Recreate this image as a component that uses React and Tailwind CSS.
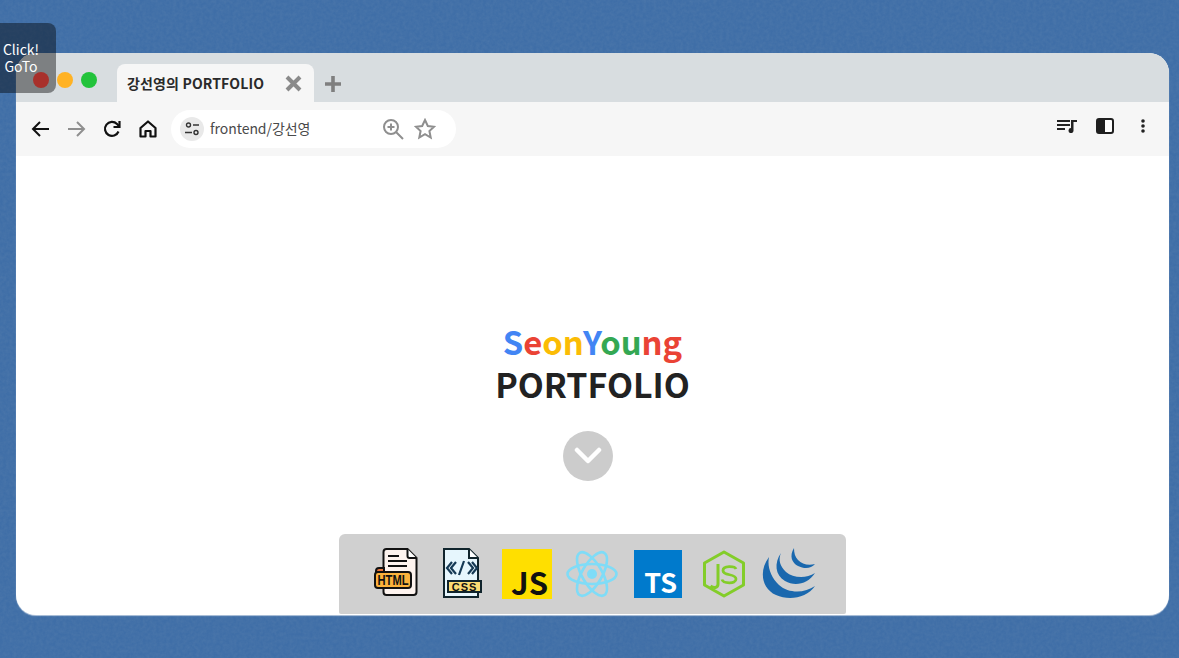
function HtmlIcon() {
  return (
    <svg width="44" height="48" viewBox="0 0 44 48" fill="none">
      <path d="M9.5 4a3 3 0 0 1 3-3h21l9 9v34a3 3 0 0 1-3 3h-27a3 3 0 0 1-3-3z" fill="#fdf3ee" stroke="#111" strokeWidth="2" />
      <path d="M33.5 1v7a2 2 0 0 0 2 2h7" fill="#fff" stroke="#111" strokeWidth="2" />
      <path d="M14 8h11M14 13h19M14 18h19" stroke="#111" strokeWidth="2" />
      <path d="M2 24v-1a3 3 0 0 1 3-3h5v5z" fill="#e8743b" stroke="#111" strokeWidth="2" />
      <rect x="1" y="24" width="36" height="16" rx="3" fill="#fbb23c" stroke="#111" strokeWidth="2" />
      <text x="19" y="37" textAnchor="middle" fontFamily="'Liberation Sans', sans-serif" fontWeight="700" fontSize="14" textLength="31" lengthAdjust="spacingAndGlyphs" fill="#111">HTML</text>
    </svg>
  );
}
function CssIcon() {
  return (
    <svg width="41" height="50" viewBox="0 0 41 50" fill="none">
      <path d="M3 1h25l9 9v39H3z" fill="#e6f6fd" stroke="#10242c" strokeWidth="2" />
      <path d="M28 1v9h9" fill="#fff" stroke="#10242c" strokeWidth="2" />
      <path d="M11 14l-5 6 5 6M15 14l-5 6 5 6M27 14l5 6-5 6M31 14l5 6-5 6M23 13l-5 14" stroke="#163a55" strokeWidth="2.2" />
      <rect x="7" y="33" width="33" height="11" fill="#fbdc74" stroke="#10242c" strokeWidth="2" />
      <text x="23.5" y="42.7" textAnchor="middle" fontFamily="'Liberation Sans', sans-serif" fontWeight="700" fontSize="11" letterSpacing="1" fill="#111">CSS</text>
    </svg>
  );
}
function ReactIcon() {
  return (
    <svg width="52" height="50" viewBox="0 0 52 50" fill="none" stroke="#7fdcf7" strokeWidth="2.6">
      <circle cx="26" cy="25" r="5" fill="#7fdcf7" stroke="none" />
      <ellipse cx="26" cy="25" rx="24.5" ry="10" />
      <ellipse cx="26" cy="25" rx="24.5" ry="10" transform="rotate(60 26 25)" />
      <ellipse cx="26" cy="25" rx="24.5" ry="10" transform="rotate(120 26 25)" />
    </svg>
  );
}
function NodeIcon() {
  return (
    <svg width="44" height="48" viewBox="0 0 44 48" fill="none" stroke="#83cd29" strokeWidth="3" strokeLinejoin="round">
      <path d="M22 2L41.5 13v22L22 46 2.5 35V13z" />
      <path d="M16 14v20c0 4-4 4.500-7.500 2" />
      <path d="M34 19c-1-3-13-4-13 1.500 0 6 13 2.500 13 8.500 0 5.500-13 4.500-14 .5" strokeWidth="2.8" />
    </svg>
  );
}
function JqueryIcon() {
  return (
    <svg width="54" height="52" viewBox="0 0 54 52" fill="#1a68ae">
      <path d="M7 9C-3 22-1 40 14 47c13 6 31 3 39-9-10 7-26 8-36-1C9 29 5 19 7 9z" />
      <path d="M19 5c-7 10-6 22 4 28 10 6 23 3 30-8-9 6-22 5-29-1-6-6-8-12-5-19z" />
      <path d="M32 0c-5 8-2 15 4 18 6 3 13 3 17-2-7 2-13 0-17-4-3-3-4-7-4-12z" />
    </svg>
  );
}
export default function App() {
  return (
    <div className="relative h-[658px] w-full overflow-hidden bg-[#3f6ea7] pt-[53px] pl-[16px] pr-[10px] pb-[43px] font-['Noto_Sans_CJK_KR','Noto_Sans',sans-serif]">
      <svg className="absolute inset-0" width="1179" height="658">
        <filter id="paper">
          <feTurbulence type="fractalNoise" baseFrequency="0.3" numOctaves="3" seed="4" />
          <feColorMatrix values="0 0 0 0 0.15  0 0 0 0 0.27  0 0 0 0 0.45  0 0 0 0.35 -0.09" />
        </filter>
        <rect width="1179" height="658" filter="url(#paper)" />
      </svg>
      <div className="relative flex h-full flex-col overflow-hidden rounded-[20px] bg-white shadow-[0_1px_1px_rgba(255,255,255,0.6)]">
        <div className="flex h-[49px] shrink-0 items-end bg-[#d8dde0] pl-[101px]">
          <div className="flex h-[38px] w-[197px] items-center justify-between rounded-t-[8px] bg-[#f6f6f6] pl-[10px] pr-[12px] pt-[1px]">
            <span className="text-[14px] font-bold tracking-[0.14px] text-[#2a2a2a]">강선영의 PORTFOLIO</span>
            <svg width="17" height="17" viewBox="0 0 17 17" stroke="#8a8a8a" strokeWidth="4"><path d="M2 2l13 13M15 2L2 15" /></svg>
          </div>
          <svg className="mb-[10px] ml-[11px]" width="16" height="16" viewBox="0 0 16 16" stroke="#7f7f7f" strokeWidth="3.6"><path d="M8 0v16M0 8h16" /></svg>
        </div>
        <div className="flex h-[54px] shrink-0 items-center bg-[#f6f6f6] pb-[1px] pl-[15px] pr-[24px]">
          <svg width="19" height="18" viewBox="0 0 19 18" fill="none" stroke="#111" strokeWidth="2"><path d="M18 9H2M9 2L2 9l7 7" /></svg>
          <svg className="ml-[17px]" width="19" height="18" viewBox="0 0 19 18" fill="none" stroke="#8f8f8f" strokeWidth="2"><path d="M1 9h16M10 2l7 7-7 7" /></svg>
          <svg className="ml-[17px]" width="18" height="18" viewBox="0 0 18 18" fill="none" stroke="#111" strokeWidth="2.2"><path d="M15.5 11.5A7 7 0 1 1 14 4l2 2" /><path d="M16.5 1v6h-6" /></svg>
          <svg className="ml-[18px]" width="18" height="18" viewBox="0 0 18 18" fill="none" stroke="#111" strokeWidth="2.2" strokeLinejoin="round"><path d="M1.5 8L9 1.500 16.500 8v8.500h-5V11h-5v5.500h-5z" /></svg>
          <div className="ml-[14px] flex h-[38px] w-[285px] items-center rounded-full bg-white pl-[9px]">
            <div className="flex h-[24px] w-[24px] items-center justify-center rounded-full bg-[#e9e9e9]">
              <svg width="14" height="14" viewBox="0 0 14 14" fill="none" stroke="#333" strokeWidth="1.4"><circle cx="3.500" cy="3" r="2" /><path d="M8 3h6M0 10.500h7" /><circle cx="11" cy="10.500" r="2" /></svg>
            </div>
            <span className="ml-[6px] w-[172px] text-[14px] tracking-[-0.05px] text-[#4a4a4a]">frontend/강선영</span>
            <svg width="22" height="22" viewBox="0 0 22 22" fill="none" stroke="#8f8f8f" strokeWidth="2"><circle cx="9" cy="9" r="7" /><path d="M14 14l7 7M5.500 9h7M9 5.500v7" /></svg>
            <svg className="ml-[10px]" width="22" height="22" viewBox="0 0 22 22" fill="none" stroke="#8f8f8f" strokeWidth="2"><path d="M11 2l2.800 6 6.200.7-4.600 4.300 1.300 6.500L11 16.200 5.300 19.500 6.600 13 2 8.700 8.200 8z" /></svg>
          </div>
          <div className="ml-auto mb-[6px] flex items-center">
            <svg width="20" height="14" viewBox="0 0 20 14" fill="#222"><path d="M0 1h13v2H0zM0 5h13v2H0zM0 9h8v2H0z" /><path d="M14 1h6v2h-3.500v8.500a2.500 2.500 0 1 1-2.500-2.400z" /></svg>
            <svg className="ml-[19px]" width="18" height="16" viewBox="0 0 18 16" fill="none"><rect x="1" y="1" width="16" height="14" rx="2" stroke="#1f1f1f" strokeWidth="2" fill="#fff" /><path d="M2 1h7v14H2a1 1 0 0 1-1-1V2a1 1 0 0 1 1-1z" fill="#1f1f1f" /></svg>
            <svg className="ml-[27px]" width="4" height="14" viewBox="0 0 4 14" fill="#222"><circle cx="2" cy="2" r="1.800" /><circle cx="2" cy="7" r="1.800" /><circle cx="2" cy="12" r="1.800" /></svg>
          </div>
        </div>
        <main className="flex flex-1 flex-col items-center">
          <h1 className="mt-[163px] text-[32.8px] leading-[43px] font-bold">
            <span className="text-[#4285f4]">S</span>
            <span className="text-[#ea4335]">e</span>
            <span className="text-[#fbbc05]">on</span>
            <span className="text-[#4285f4]">Y</span>
            <span className="text-[#34a853]">ou</span>
            <span className="text-[#ea4335]">ng</span>
          </h1>
          <h2 className="text-[33.9px] leading-[43px] font-bold text-[#222]">PORTFOLIO</h2>
          <div className="mt-[26px] mr-[9px] flex h-[50px] w-[50px] items-center justify-center rounded-full bg-[#cccccc]">
            <svg width="28" height="18" viewBox="0 0 28 18" fill="none" stroke="#fff" strokeWidth="4.500" strokeLinecap="round" strokeLinejoin="round"><path d="M3 3l11 11L25 3" /></svg>
          </div>
          <div className="mt-auto mb-[1px] flex h-[80px] w-[507px] items-center rounded-t-[6px] rounded-b-[2px] bg-[#d0d0d0] pl-[35px]">
            <div className="mb-[5px]"><HtmlIcon /></div>
            <div className="mb-[2px] ml-[23px]"><CssIcon /></div>
            <div className="ml-[20px] flex h-[50px] w-[50px] items-end justify-end bg-[#ffdf00] pr-[4px] text-[31px] leading-[34px] font-bold text-[#111]">JS</div>
            <div className="ml-[14px]"><ReactIcon /></div>
            <div className="ml-[16px] flex h-[48px] w-[48px] items-end justify-end bg-[#007acc] pr-[5px] text-[27px] leading-[32px] font-bold text-white">TS</div>
            <div className="ml-[20px]"><NodeIcon /></div>
            <div className="ml-[16px]"><JqueryIcon /></div>
          </div>
        </main>
      </div>
      <div className="absolute top-[23px] left-0 flex h-[70px] w-[56px] flex-col items-center justify-end rounded-r-[8px] bg-[rgba(0,0,0,0.42)] pb-[18px] pr-[14px] text-center text-[14px] leading-[17px] text-white">
        <span>Click!</span>
        <span>GoTo</span>
      </div>
      <div className="absolute top-[72px] left-[33px] flex gap-[8px]">
        <span className="h-[16px] w-[16px] rounded-full bg-[#a8302b]" />
        <span className="h-[16px] w-[16px] rounded-full bg-[#ffb224]" />
        <span className="h-[16px] w-[16px] rounded-full bg-[#22c33b]" />
      </div>
    </div>
  );
}
